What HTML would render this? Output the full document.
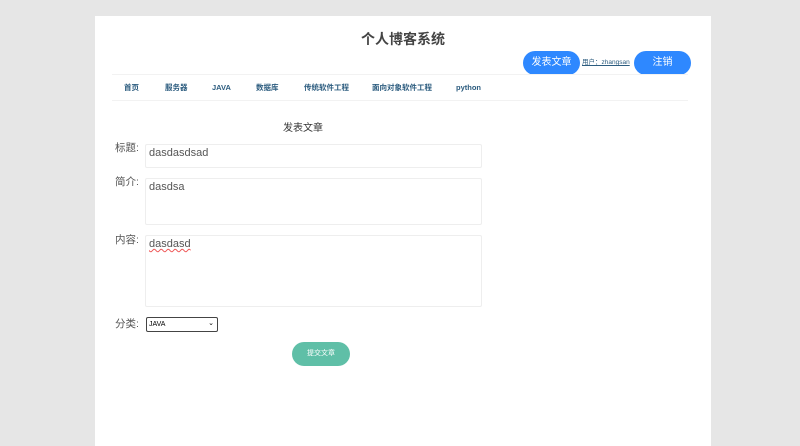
<!DOCTYPE html>
<html><head><meta charset="utf-8"><style>
*{margin:0;padding:0;box-sizing:border-box}
body{width:800px;height:434px;background:#e6e6e6;font-family:"Liberation Sans","Noto Sans CJK SC",sans-serif;position:relative;overflow:hidden}
.card{position:absolute;left:95px;top:16px;width:616px;height:430px;background:#fff}
.abs{position:absolute}
h1{position:absolute;left:0;width:616px;top:13px;text-align:center;font-size:14px;line-height:20px;font-weight:bold;color:#444}
.btn{position:absolute;background:#2e88ff;color:#fff;border-radius:12px;text-align:center;font-size:10px;line-height:24px;height:24px}
.nav{position:absolute;left:17px;top:58px;width:576px;height:27px;border-top:1px solid #f2f2f2;border-bottom:1px solid #f2f2f2}
.nav span{position:absolute;top:8px;font-size:7.5px;line-height:10px;font-weight:bold;color:#2c5c7f}
.lbl{position:absolute;left:20px;font-size:10.5px;line-height:12px;color:#555}
.box{position:absolute;left:50px;width:337px;border:1px solid #eee;border-radius:2px;font-size:11px;line-height:13px;color:#555;padding:2px 3px}
</style></head><body>
<div class="card">
<h1>个人博客系统</h1>
<div class="btn" style="left:428px;top:35px;width:57px">发表文章</div>
<div class="abs" style="left:487px;top:43px;font-size:6.5px;line-height:8px;color:#2c5c7f;text-decoration:underline">用户：zhangsan</div>
<div class="btn" style="left:539px;top:35px;width:57px">注销</div>
<div class="nav">
<span style="left:12px">首页</span><span style="left:53px">服务器</span><span style="left:100px">JAVA</span><span style="left:144px">数据库</span><span style="left:192px">传统软件工程</span><span style="left:260px">面向对象软件工程</span><span style="left:344px">python</span>
</div>
<div class="abs" style="left:188px;top:107px;font-size:10px;line-height:12px;color:#333">发表文章</div>
<div class="lbl" style="top:126px">标题:</div>
<div class="box" style="top:128px;height:24px">dasdasdsad</div>
<div class="lbl" style="top:160px">简介:</div>
<div class="box" style="top:162px;height:47px">dasdsa</div>
<div class="lbl" style="top:218px">内容:</div>
<div class="box" style="top:219px;height:72px"><span style="text-decoration:underline wavy #e55;text-decoration-thickness:1px">dasdasd</span></div>
<div class="lbl" style="top:302px">分类:</div>
<div class="abs" style="left:51px;top:301px;width:72px;height:15px;border:1px solid #444;border-radius:2px;font-size:7px;line-height:9px;padding:2px 2px;color:#000">JAVA<span style="position:absolute;right:3px;top:1px;font-size:7px">⌄</span></div>
<div class="abs" style="left:197px;top:326px;width:58px;height:24px;border-radius:12px;background:#5fbfa7;color:#fff;font-size:7px;text-align:center;line-height:24px">提交文章</div>
</div>
</body></html>
